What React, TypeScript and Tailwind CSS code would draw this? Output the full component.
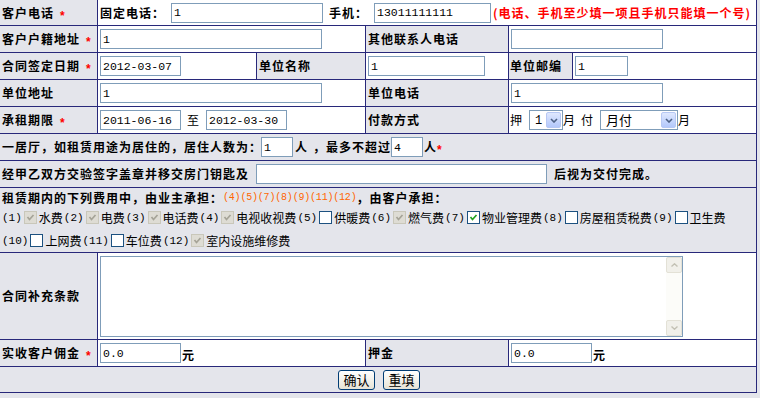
import type { ReactNode } from "react";

const cjk = "font-['Noto_Sans_CJK_SC',sans-serif]";
const mono = "font-['Liberation_Mono',monospace]";

const lab = "bg-[#e4e5eb] flex items-center pl-[2px] font-bold tracking-[1px] text-[12px] leading-[14px] text-black whitespace-nowrap";
const val = "bg-white flex items-center pl-[2px] whitespace-nowrap text-[12px] leading-[14px]";
const wide = "bg-[#e4e5eb] flex items-center pl-[2px] whitespace-nowrap text-[12px] leading-[14px]";

function Star() {
  return <span className="ml-[6px] translate-y-[3px] font-['Liberation_Sans',sans-serif] font-bold text-[12px] text-[#ff0000]">*</span>;
}

function Field({ className, value }: { className: string; value?: string }) {
  return (
    <input
      readOnly
      defaultValue={value}
      className={`h-[20px] border border-[#7f9db9] bg-white pl-[2px] text-[11.5px] text-black outline-none ${mono} ${className}`}
    />
  );
}

function Sel({ className, value }: { className: string; value: ReactNode }) {
  return (
    <div className={`h-[20px] border border-[#7f9db9] bg-white flex items-center justify-between pr-px ${className}`}>
      <span className="text-[13px]">{value}</span>
      <span className="w-[15px] h-[16px] rounded-[2px] border border-[#b7c8f4] bg-linear-to-b from-[#dfe8fe] to-[#b3c8fb] flex items-center justify-center">
        <svg width="8" height="5" viewBox="0 0 8 5">
          <path d="M1 1 L4 4 L7 1" fill="none" stroke="#4d6185" strokeWidth="1.6" />
        </svg>
      </span>
    </div>
  );
}

function Cb({ kind }: { kind: "off" | "dis" | "on" }) {
  if (kind === "dis")
    return (
      <span className="w-[13px] h-[13px] border border-[#c9c7ba] bg-[#dedcd4] flex items-center justify-center">
        <svg width="9" height="9" viewBox="0 0 9 9">
          <path d="M1.5 4 L3.5 6.5 L7.5 2" fill="none" stroke="#a5a397" strokeWidth="1.7" />
        </svg>
      </span>
    );
  return (
    <span className="w-[13px] h-[13px] border border-[#1c5180] bg-white flex items-center justify-center">
      {kind === "on" && (
        <svg width="9" height="9" viewBox="0 0 9 9">
          <path d="M1.5 4 L3.5 6.5 L7.5 2" fill="none" stroke="#21a121" strokeWidth="1.7" />
        </svg>
      )}
    </span>
  );
}

function Fee({ n, kind, label, first }: { n: string; kind: "off" | "dis" | "on"; label: string; first?: boolean }) {
  return (
    <span className={`flex items-center ${first ? "" : "ml-px"}`}>
      <span className={`text-[11px] ${mono}`}>({n})</span>
      <span className="ml-[2px]">
        <Cb kind={kind} />
      </span>
      <span className="ml-[2px] text-[12px]">{label}</span>
    </span>
  );
}

function Button({ children }: { children: ReactNode }) {
  return (
    <button className="h-[20px] w-[37px] rounded-[3px] border border-[#003c74] bg-linear-to-b from-white to-[#e6e3d6] text-[13px] leading-[14px] text-black flex items-center justify-center">
      {children}
    </button>
  );
}

function Chev({ up }: { up?: boolean }) {
  return (
    <span className="h-[16px] rounded-[2px] border border-[#e3e1d6] bg-[#f1f0ea] flex items-center justify-center">
      <svg width="7" height="4" viewBox="0 0 7 4">
        <path d={up ? "M0.5 3.5 L3.5 0.8 L6.5 3.5" : "M0.5 0.5 L3.5 3.2 L6.5 0.5"} fill="none" stroke="#c3c1b4" strokeWidth="1.4" />
      </svg>
    </span>
  );
}

export default function App() {
  return (
    <div className={`min-h-screen w-full bg-[#e4e5eb] text-black ${cjk}`}>
      <div className="grid w-[757px] grid-cols-[97px_158px_108px_142px_63px_183px] grid-rows-[25px_26px_26px_26px_26px_26px_26px_64px_86px_26px_25px] gap-px bg-[#28287a] pr-px pb-px">
        {/* row 1 */}
        <div className={lab}>客户电话<Star /></div>
        <div className={`${val} col-span-5`}>
          <span className="font-bold tracking-[1px]">固定电话：</span>
          <Field className="ml-[6px] w-[152px]" value="1" />
          <span className="ml-[6px] font-bold tracking-[1px]">手机：</span>
          <Field className="ml-[6px] w-[117px]" value="13011111111" />
          <span className="ml-[2px] font-bold tracking-[1px] text-[#ff0000]">(电话、手机至少填一项且手机只能填一个号)</span>
        </div>

        {/* row 2 */}
        <div className={lab}>客户户籍地址<Star /></div>
        <div className={`${val} col-span-2`}><Field className="w-[222px]" value="1" /></div>
        <div className={lab}>其他联系人电话</div>
        <div className={`${val} col-span-2`}><Field className="w-[152px]" /></div>

        {/* row 3 */}
        <div className={lab}>合同签定日期<Star /></div>
        <div className={val}><Field className="w-[81px]" value="2012-03-07" /></div>
        <div className={lab}>单位名称</div>
        <div className={val}><Field className="w-[117px]" value="1" /></div>
        <div className={`${lab} pl-px`}>单位邮编</div>
        <div className={val}><Field className="w-[53px]" value="1" /></div>

        {/* row 4 */}
        <div className={lab}>单位地址</div>
        <div className={`${val} col-span-2`}><Field className="w-[222px]" value="1" /></div>
        <div className={lab}>单位电话</div>
        <div className={`${val} col-span-2`}><Field className="w-[152px]" value="1" /></div>

        {/* row 5 */}
        <div className={lab}>承租期限<Star /></div>
        <div className={`${val} col-span-2`}>
          <Field className="w-[81px]" value="2011-06-16" />
          <span className="ml-[6px]">至</span>
          <Field className="ml-[7px] w-[81px]" value="2012-03-30" />
        </div>
        <div className={lab}>付款方式</div>
        <div className={`${val} col-span-2 pl-px`}>
          <span>押</span>
          <Sel className="ml-[7px] w-[34px] pl-[5px]" value={<span className={`text-[12px] ${mono}`}>1</span>} />
          <span>月</span>
          <span className="ml-[6px]">付</span>
          <Sel className="ml-[7px] w-[78px] pl-[5px]" value="月付" />
          <span>月</span>
        </div>

        {/* row 6 */}
        <div className={`${wide} col-span-6`}>
          <span className="font-bold tracking-[1px]">一居厅，如租赁用途为居住的，居住人数为：</span>
          <Field className="-ml-px w-[32px]" value="1" />
          <span className="ml-[2px] font-bold tracking-[1px]">人</span>
          <span className="ml-[5px] font-bold tracking-[1px]">，最多不超过</span>
          <Field className="w-[32px]" value="4" />
          <span className="ml-px font-bold tracking-[1px]">人</span>
          <span className="translate-y-[3px] font-['Liberation_Sans',sans-serif] font-bold text-[12px] text-[#ff0000]">*</span>
        </div>

        {/* row 7 */}
        <div className={`${wide} col-span-6`}>
          <span className="font-bold tracking-[1px]">经甲乙双方交验签字盖章并移交房门钥匙及</span>
          <Field className="ml-[7px] w-[291px]" />
          <span className="ml-[7px] font-bold tracking-[1px]">后视为交付完成。</span>
        </div>

        {/* row 8 */}
        <div className={`${wide} col-span-6 flex-col items-start pt-px`}>
          <div className="h-[18px] flex items-center">
            <span className="font-bold tracking-[1px]">租赁期内的下列费用中，由业主承担：</span>
            <span className={`text-[10px] tracking-[-0.2px] text-[#ff6600] ${mono}`}>(4)(5)(7)(8)(9)(11)(12)</span>
            <span className="font-bold tracking-[1px]">，由客户承担：</span>
          </div>
          <div className="h-[24px] flex items-center">
            <Fee first n="1" kind="dis" label="水费" />
            <Fee n="2" kind="dis" label="电费" />
            <Fee n="3" kind="dis" label="电话费" />
            <Fee n="4" kind="dis" label="电视收视费" />
            <Fee n="5" kind="off" label="供暖费" />
            <Fee n="6" kind="dis" label="燃气费" />
            <Fee n="7" kind="on" label="物业管理费" />
            <Fee n="8" kind="off" label="房屋租赁税费" />
            <Fee n="9" kind="off" label="卫生费" />
          </div>
          <div className="h-[24px] flex items-center">
            <Fee first n="10" kind="off" label="上网费" />
            <Fee n="11" kind="off" label="车位费" />
            <Fee n="12" kind="dis" label="室内设施维修费" />
          </div>
        </div>

        {/* row 9 */}
        <div className={lab}>合同补充条款</div>
        <div className={`${val} col-span-5`}>
          <div className="h-[81px] w-[583px] border border-[#7f9db9] bg-white flex justify-end">
            <div className="w-[16px] bg-[#fcfcf9] flex flex-col justify-between">
              <Chev up />
              <Chev />
            </div>
          </div>
        </div>

        {/* row 10 */}
        <div className={lab}>实收客户佣金<Star /></div>
        <div className={`${val} col-span-2`}>
          <Field className="w-[81px]" value="0.0" />
          <span className="ml-px mt-[4px] font-bold">元</span>
        </div>
        <div className={lab}>押金</div>
        <div className={`${val} col-span-2`}>
          <Field className="w-[81px]" value="0.0" />
          <span className="ml-px mt-[4px] font-bold">元</span>
        </div>

        {/* row 11 */}
        <div className={`${wide} col-span-6 justify-center gap-[8px] pl-0`}>
          <Button>确认</Button>
          <Button>重填</Button>
        </div>
      </div>
    </div>
  );
}
